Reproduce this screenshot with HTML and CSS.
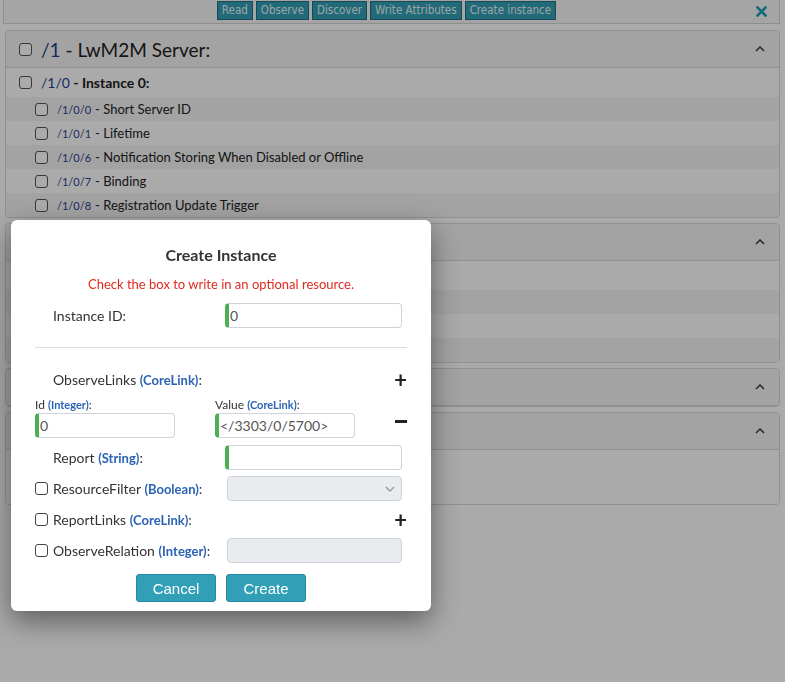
FILE: index.html
```html
<!DOCTYPE html>
<html>
<head>
<meta charset="utf-8">
<link rel="stylesheet" href="styles.css">
</head>
<body>
<div class="page">
  <div class="toolbar">
    <span></span>
    <div class="tb-buttons">
      <button class="tb-btn">Read</button>
      <button class="tb-btn">Observe</button>
      <button class="tb-btn">Discover</button>
      <button class="tb-btn">Write Attributes</button>
      <button class="tb-btn">Create instance</button>
    </div>
    <span class="tb-close"><svg width="11" height="11" viewBox="0 0 11 11"><path d="M1.5 1.5 L9.5 9.5 M9.5 1.5 L1.5 9.5" stroke="#17a2b8" stroke-width="2.6" stroke-linecap="square"/></svg></span>
  </div>

  <div class="card">
    <div class="card-header">
      <input type="checkbox" class="cb">
      <span class="obj-title"><span class="link">/1</span> - LwM2M Server:</span>
      <svg class="chev" width="10" height="6" viewBox="0 0 10 6"><path d="M1 5 L5 1 L9 5" fill="none" stroke="#444" stroke-width="1.6"/></svg>
    </div>
    <div class="inst-row">
      <input type="checkbox" class="cb">
      <span class="inst-title"><span class="link">/1/0</span> - Instance 0:</span>
    </div>
    <div class="res-row"><input type="checkbox" class="cb"><span class="res-path">/1/0/0</span><span class="res-name">- Short Server ID</span></div>
    <div class="res-row"><input type="checkbox" class="cb"><span class="res-path">/1/0/1</span><span class="res-name">- Lifetime</span></div>
    <div class="res-row"><input type="checkbox" class="cb"><span class="res-path">/1/0/6</span><span class="res-name">- Notification Storing When Disabled or Offline</span></div>
    <div class="res-row"><input type="checkbox" class="cb"><span class="res-path">/1/0/7</span><span class="res-name">- Binding</span></div>
    <div class="res-row"><input type="checkbox" class="cb"><span class="res-path">/1/0/8</span><span class="res-name">- Registration Update Trigger</span></div>
  </div>

  <div class="card">
    <div class="card-header">
      <svg class="chev" width="10" height="6" viewBox="0 0 10 6"><path d="M1 5 L5 1 L9 5" fill="none" stroke="#444" stroke-width="1.6"/></svg>
    </div>
    <div class="blank-row tall"></div>
    <div class="blank-row"></div>
    <div class="blank-row"></div>
    <div class="blank-row"></div>
  </div>

  <div class="card">
    <div class="card-header">
      <svg class="chev" width="10" height="6" viewBox="0 0 10 6"><path d="M1 5 L5 1 L9 5" fill="none" stroke="#444" stroke-width="1.6"/></svg>
    </div>
  </div>

  <div class="card">
    <div class="card-header">
      <svg class="chev" width="10" height="6" viewBox="0 0 10 6"><path d="M1 5 L5 1 L9 5" fill="none" stroke="#444" stroke-width="1.6"/></svg>
    </div>
    <div class="blank-row body-tall"></div>
  </div>
</div>

<div class="overlay"></div>

<div class="modal">
  <h2 class="modal-title">Create Instance</h2>
  <p class="modal-hint">Check the box to write in an optional resource.</p>

  <div class="frow first">
    <span class="cb-slot"></span>
    <label class="flabel">Instance ID:</label>
    <div class="finput valid">0</div>
  </div>

  <hr class="sep">

  <div class="frow links-head">
    <span class="cb-slot"></span>
    <label class="flabel">ObserveLinks <span class="type">(CoreLink)</span>:</label>
    <span class="plus">+</span>
  </div>

  <div class="subrow">
    <div class="subcol">
      <label class="sublabel">Id <span class="type">(Integer)</span>:</label>
      <div class="finput valid small">0</div>
    </div>
    <div class="subcol">
      <label class="sublabel">Value <span class="type">(CoreLink)</span>:</label>
      <div class="finput valid small">&lt;/3303/0/5700&gt;</div>
    </div>
    <span class="minus"></span>
  </div>

  <div class="frow report">
    <span class="cb-slot"></span>
    <label class="flabel">Report <span class="type">(String)</span>:</label>
    <div class="finput valid"></div>
  </div>

  <div class="frow">
    <input type="checkbox" class="cb mcb">
    <label class="flabel">ResourceFilter <span class="type">(Boolean)</span>:</label>
    <div class="finput disabled">
      <svg class="sel-chev" width="10" height="6" viewBox="0 0 10 6"><path d="M1 1 L5 5 L9 1" fill="none" stroke="#999" stroke-width="1.4"/></svg>
    </div>
  </div>

  <div class="frow">
    <input type="checkbox" class="cb mcb">
    <label class="flabel">ReportLinks <span class="type">(CoreLink)</span>:</label>
    <span class="plus">+</span>
  </div>

  <div class="frow">
    <input type="checkbox" class="cb mcb">
    <label class="flabel">ObserveRelation <span class="type">(Integer)</span>:</label>
    <div class="finput disabled"></div>
  </div>

  <div class="actions">
    <button class="mbtn">Cancel</button>
    <button class="mbtn">Create</button>
  </div>
</div>
</body>
</html>
```

FILE: styles.css
```css
* { box-sizing: border-box; }
html, body { margin: 0; padding: 0; }
body {
  width: 785px;
  height: 682px;
  overflow: hidden;
  background: #fff;
  font-family: "Lato", "Open Sans", sans-serif;
  color: #212529;
  position: relative;
}
.page { padding: 0 5px 0 3px; }

.toolbar {
  display: grid;
  grid-template-columns: 1fr auto 1fr;
  align-items: center;
  height: 24px;
  border: 1px solid #d6d6d6;
  border-top: none;
  background: #f8f8f8;
  margin-bottom: 6px;
  padding: 0 12px 0 0;
}
.tb-buttons { display: flex; gap: 3px; margin-left: 2px; }
.tb-btn {
  font-family: "DejaVu Sans Condensed", "Liberation Sans Narrow", sans-serif;
  font-size: 11.5px;
  color: #eaf6f8;
  background: #31a0b6;
  border: 1px solid #256f80;
  height: 19px;
  padding: 0 4px;
  margin-top: -3px;
  border-radius: 0;
}
.tb-close { justify-self: end; display: flex; }

.card {
  margin-left: 2px;
  border: 1px solid #d9d9d9;
  border-radius: 4px;
  margin-bottom: 5px;
  overflow: hidden;
}
.card-header {
  height: 37px;
  background: #f5f5f5;
  border-bottom: 1px solid #d9d9d9;
  display: flex;
  align-items: center;
  padding-left: 13px;
  padding-right: 14px;
}
.card-header .chev { margin-left: auto; }
.obj-title { font-size: 19px; margin-left: 9px; color: #222; }
.link { color: #1f3f8f; }
.cb {
  appearance: none;
  -webkit-appearance: none;
  width: 13px;
  height: 13px;
  margin: 0;
  border: 1px solid #555;
  border-radius: 3px;
  background: #fff;
  flex: none;
}
.inst-row {
  height: 29px;
  display: flex;
  align-items: center;
  padding-left: 13px;
  background: #fff;
}
.inst-title { font-size: 14px; font-weight: 700; margin-left: 9px; color: #222; }
.inst-title .link { font-weight: 400; }
.res-row {
  height: 24px;
  display: flex;
  align-items: center;
  padding-left: 29px;
  background: #fff;
}
.res-row:nth-child(odd) { background: #f5f5f5; }
.res-path { font-size: 11px; color: #2a3f8f; margin-left: 9px; }
.res-name { font-size: 13px; color: #222; margin-left: 4px; }
.blank-row { height: 24px; background: #f5f5f5; }
.blank-row:nth-child(even) { background: #fff; }
.blank-row.tall { height: 29px; }
.blank-row.body-tall { height: 54px; background: #fff; }

.overlay {
  position: fixed;
  inset: 0;
  background: rgba(0, 0, 0, 0.335);
}

.modal {
  position: absolute;
  left: 11px;
  top: 220px;
  width: 420px;
  height: 391px;
  background: #fff;
  border-radius: 6px;
  box-shadow: 0 10px 28px rgba(0, 0, 0, 0.45);
  padding: 24px 24px 0 24px;
  color: #333;
}
.modal-title {
  margin: 0;
  text-align: center;
  font-size: 16px;
  font-weight: 700;
  color: #333;
  line-height: 22px;
}
.modal-hint {
  margin: 9px 0 0;
  text-align: center;
  color: #e02a1f;
  font-size: 13px;
  line-height: 18px;
}
.frow {
  display: grid;
  grid-template-columns: 18px 172px 177px;
  align-items: center;
  height: 25px;
  margin: 6px 0 0;
}
.frow.first { margin-top: 10px; }
.frow.links-head { margin-top: 19px; }
.frow.report { margin-top: 8px; }
.frow .cb-slot { display: block; }
.flabel { font-size: 14px; color: #333; white-space: nowrap; }
.type { color: #2b63b5; font-weight: 700; font-size: 13px; }
.mcb { border-color: #444; border-radius: 3px; }
.finput {
  height: 25px;
  border: 1px solid #ced4da;
  border-radius: 4px;
  font-size: 14px;
  color: #555;
  line-height: 23px;
  padding-left: 1px;
  background: #fff;
  position: relative;
}
.finput.valid { border-left: 4px solid #4caf50; }
.finput.disabled { background: #e9ecef; margin-left: 2px; }
.sel-chev { position: absolute; right: 6px; top: 9px; }
.sep { border: none; border-top: 1px solid #dcdcdc; margin: 19px 0 0; }
.plus {
  justify-self: end;
  font-size: 22px;
  font-weight: 700;
  line-height: 20px;
  color: #222;
  grid-column: 3;
  margin-right: -5px;
}
.subrow {
  display: grid;
  grid-template-columns: 140px 140px 1fr;
  column-gap: 40px;
  margin-top: 5px;
  align-items: end;
}
.subcol { display: flex; flex-direction: column; }
.sublabel { font-size: 12px; color: #333; line-height: 16px; margin-bottom: 0; }
.sublabel .type { font-size: 11px; }
.minus {
  justify-self: end;
  width: 12px;
  height: 3px;
  background: #222;
  margin-bottom: 15px;
}
.frow.report { margin-top: 7px; }
.actions {
  display: flex;
  justify-content: center;
  gap: 10px;
  margin-top: 11px;
}
.mbtn {
  width: 80px;
  height: 28px;
  background: #31a0b6;
  border: 1px solid #258a9f;
  border-radius: 3px;
  color: #fff;
  font-family: "Liberation Sans", Arial, sans-serif;
  font-size: 15px;
}
```
